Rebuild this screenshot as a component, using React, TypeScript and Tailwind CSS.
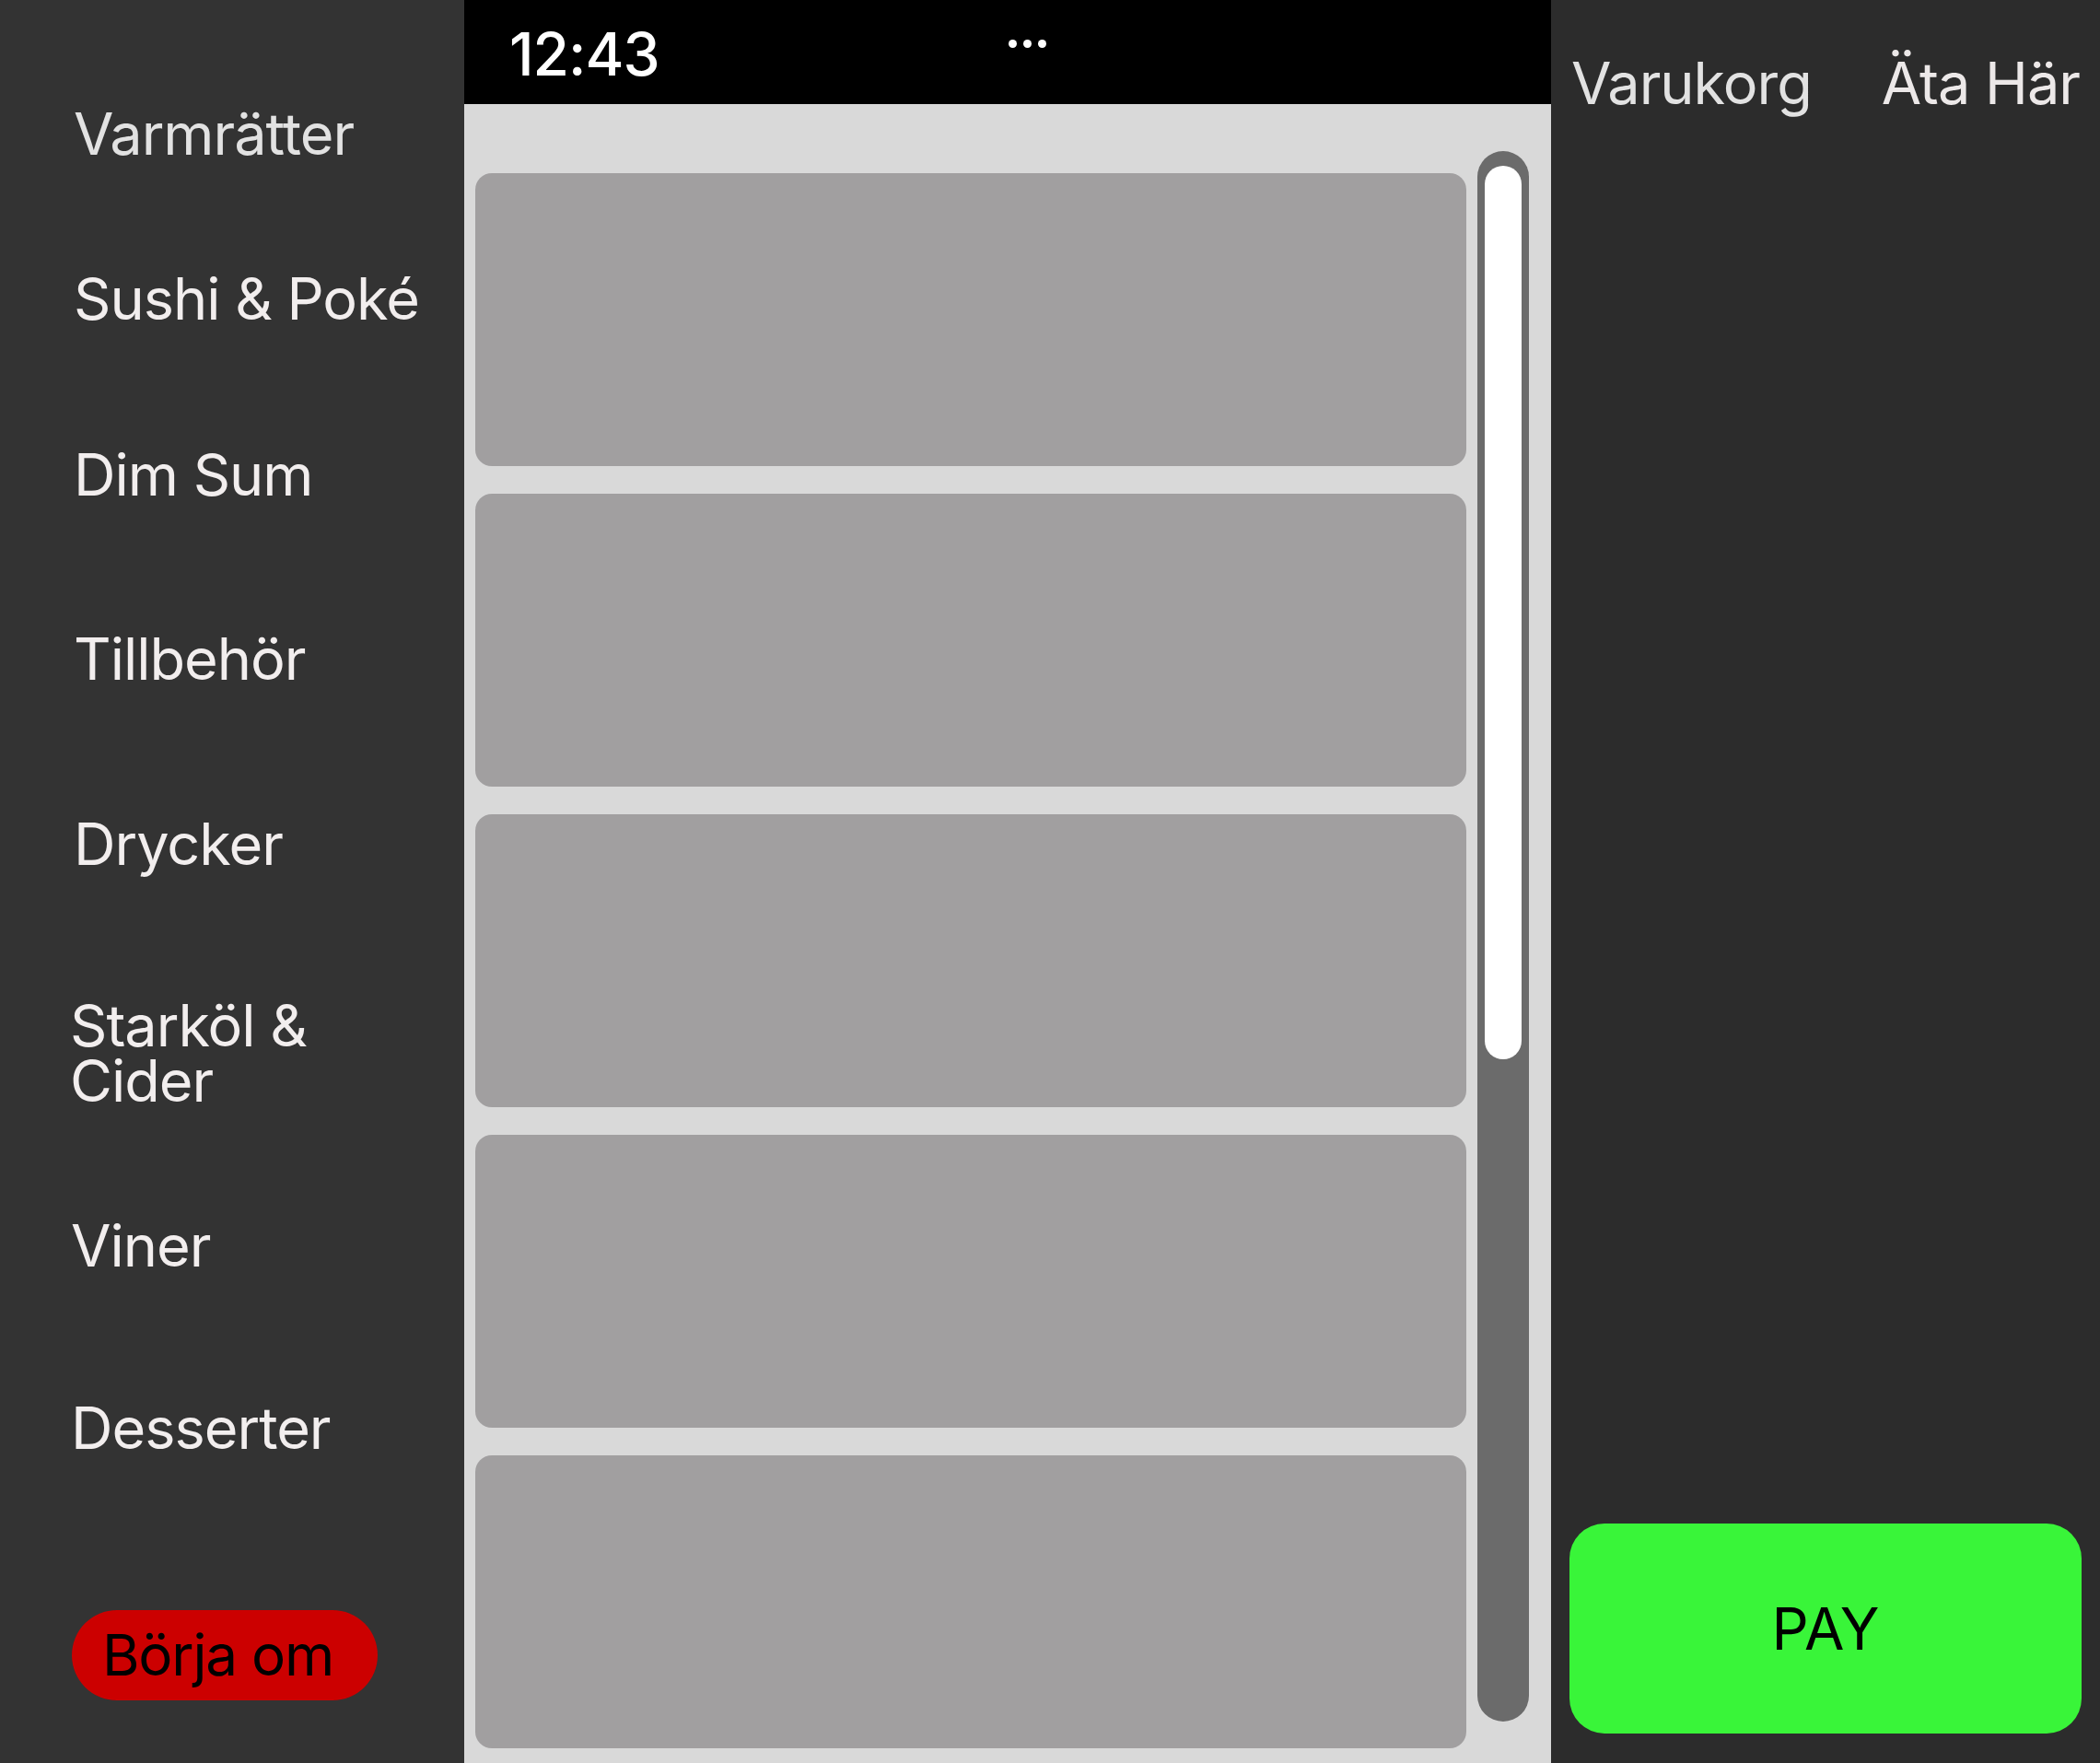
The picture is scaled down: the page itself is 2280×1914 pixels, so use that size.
const categories = [
  { name: "Varmrätter", h: "h-[178px]", color: "text-[#e2e2e2]", pl: "pl-[80px]" },
  { name: "Sushi & Poké", h: "h-[180px]", color: "text-[#f2eeee]", pl: "pl-[80px]" },
  { name: "Dim Sum", h: "h-[202px]", color: "text-[#f2eeee]", pl: "pl-[80px]" },
  { name: "Tillbehör", h: "h-[198px]", color: "text-[#f2eeee]", pl: "pl-[80px]" },
  { name: "Drycker", h: "h-[204px]", color: "text-[#f2eeee]", pl: "pl-[80px]" },
  { name: "Starköl & Cider", h: "h-[250px]", color: "text-[#f2eeee]", pl: "pl-[76px]" },
  { name: "Viner", h: "h-[168px]", color: "text-[#f2eeee]", pl: "pl-[77px]" },
  { name: "Desserter", h: "h-[228px]", color: "text-[#f2eeee]", pl: "pl-[77px]" },
];

const products = [1, 2, 3, 4, 5];

export default function App() {
  return (
    <div
      className="flex w-[2280px] h-[1914px] overflow-hidden"
      style={{ fontFamily: "Inter, 'Noto Sans', sans-serif" }}
    >
      {/* kategorier */}
      <aside className="w-[504px] h-full bg-[#333333] flex flex-col pt-[56px]">
        {categories.map((c) => (
          <div key={c.name} className={`${c.h} ${c.pl} flex items-center`}>
            <span className={`${c.color} text-[63px] leading-[60px] max-w-[400px] tracking-[-1px]`}>
              {c.name}
            </span>
          </div>
        ))}
        <div className="mt-[84px] pl-[78px]">
          <button className="w-[332px] h-[98px] rounded-full bg-[#cc0000] flex items-center pl-[33px] text-black text-[62px] leading-none tracking-[-1.2px]">
            Börja om
          </button>
        </div>
      </aside>

      {/* produkter */}
      <main className="w-[1180px] h-full flex flex-col">
        <div className="h-[113px] bg-black flex items-start relative">
          <span className="mt-[27px] ml-[49px] text-white text-[64px] leading-[64px] font-medium tracking-[-1px]">
            12:43
          </span>
          <div className="absolute left-[591px] top-[43px] flex gap-[7px]">
            <span className="w-[9px] h-[9px] rounded-full bg-white" />
            <span className="w-[9px] h-[9px] rounded-full bg-white" />
            <span className="w-[9px] h-[9px] rounded-full bg-white" />
          </div>
        </div>
        <div className="flex-1 bg-[#d9d9d9] flex">
          <div className="w-[1088px] pl-[12px] pt-[75px] flex flex-col gap-[30px]">
            {products.map((p) => (
              <div key={p} className="w-[1076px] h-[318px] shrink-0 rounded-[18px] bg-[#a19fa0]" />
            ))}
          </div>
          <div className="ml-[12px] pt-[51px]">
            <div className="w-[56px] h-[1705px] rounded-full bg-[#6b6b6b] px-[8px] pt-[16px]">
              <div className="w-[40px] h-[970px] rounded-full bg-white" />
            </div>
          </div>
        </div>
      </main>

      {/* varukorg */}
      <section className="flex-1 h-full bg-[#2c2c2c] flex flex-col">
        <div className="flex items-start pt-[60px] pl-[22px] gap-[76px]">
          <span className="text-[#e2e2e2] text-[63px] leading-[60px] tracking-[-1px]">Varukorg</span>
          <span className="text-[#ece8e8] text-[63px] leading-[60px] tracking-[-1px]">Äta Här</span>
        </div>
        <div className="flex-1" />
        <div className="px-[20px] pb-[32px]">
          <button className="w-[556px] h-[228px] rounded-[38px] bg-[#39f539] flex items-center justify-center text-black text-[63px] leading-none">
            PAY
          </button>
        </div>
      </section>
    </div>
  );
}
